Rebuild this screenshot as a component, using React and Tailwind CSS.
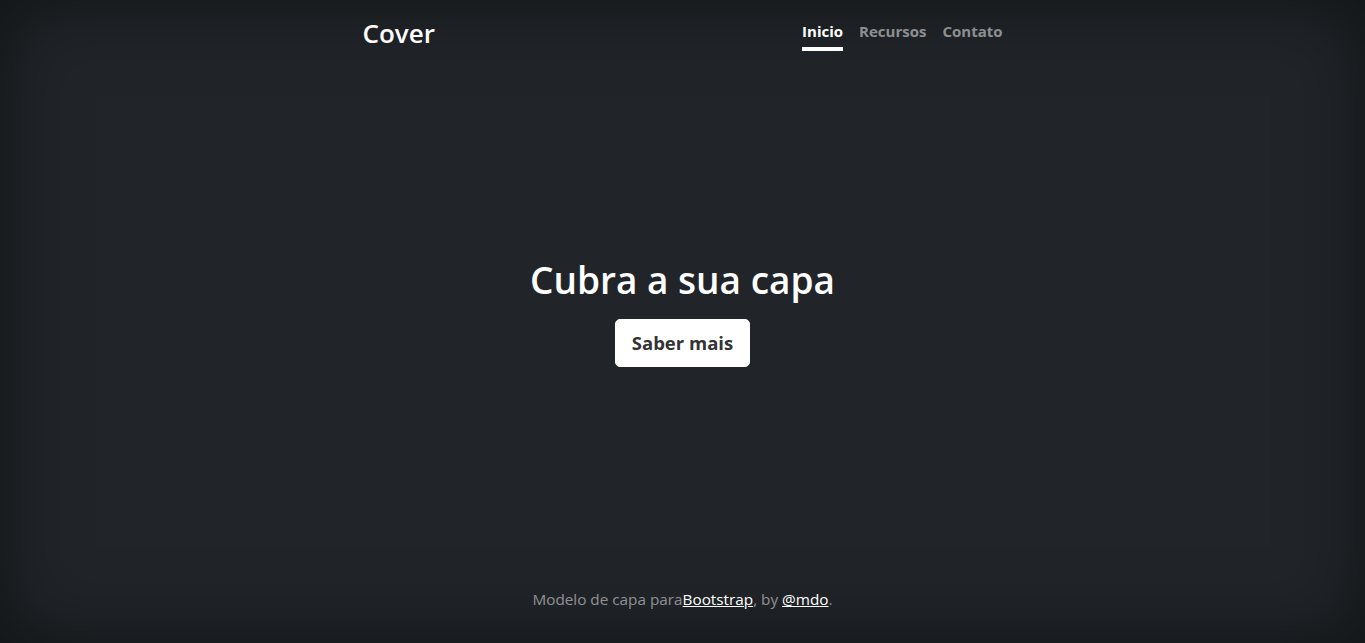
import React from 'react';

const navLinks = [
  { label: 'Inicio', active: true },
  { label: 'Recursos' },
  { label: 'Contato' },
];

export default function App() {
  return (
    <div
      className="h-[643px] w-full bg-[#212529] text-white shadow-[inset_0_0_5rem_rgba(0,0,0,0.5)]"
      style={{ fontFamily: '"Open Sans", "Noto Sans", Arial, sans-serif' }}
    >
      <div className="mx-auto flex h-full w-full max-w-[672px] flex-col p-4">
        {/* Header */}
        <header className="mb-auto flex items-start justify-between">
          <h3 className="text-[26px] leading-[34px] font-semibold">Cover</h3>
          <nav className="flex">
            {navLinks.map((link) => (
              <a
                key={link.label}
                href="#"
                className={`ml-4 border-b-4 pt-[3px] pb-1 text-[15px] leading-6 font-bold ${
                  link.active ? 'border-white text-white' : 'border-transparent text-white/50'
                }`}
              >
                {link.label}
              </a>
            ))}
          </nav>
        </header>

        {/* Main */}
        <main className="px-4 text-center">
          <h1 className="mb-[15px] text-[37px] leading-[48px] font-semibold">Cubra a sua capa</h1>
          <p className="mb-4">
            <a
              href="#"
              className="inline-block rounded-[5px] border border-white bg-white px-4 py-2 text-[18.5px] leading-[30px] font-bold text-[#333]"
            >
              Saber mais
            </a>
          </p>
        </main>

        {/* Footer */}
        <footer className="mt-auto text-center text-white/50">
          <p className="mb-4 text-[15.3px] leading-6">
            Modelo de capa para<a href="#" className="text-white underline">Bootstrap</a>, by{' '}
            <a href="#" className="text-white underline">@mdo</a>.
          </p>
        </footer>
      </div>
    </div>
  );
}
